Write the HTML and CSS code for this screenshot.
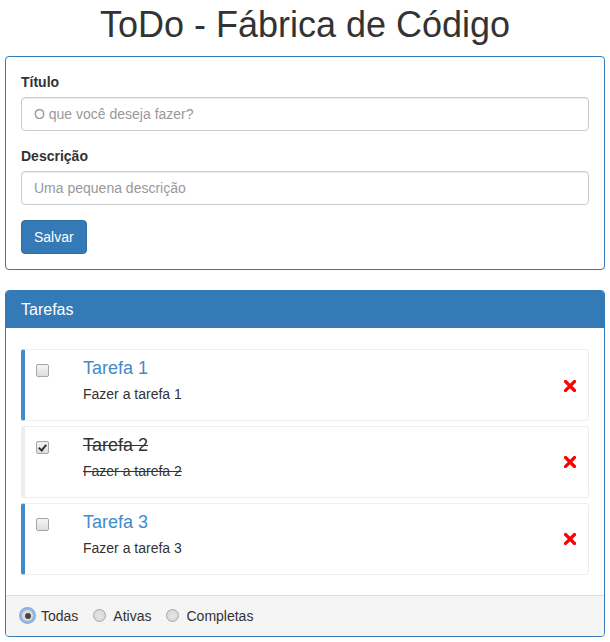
FILE: index.html
```html
<!DOCTYPE html>
<html lang="pt-BR">
<head>
    <meta charset="UTF-8">
    <meta name="viewport" content="width=device-width, initial-scale=1.0">
    <title>ToDo - Fábrica de Código</title>
    <link rel="stylesheet" href="styles.css">
</head>
<body>

    <h1 class="page-title">ToDo - Fábrica de Código</h1>

    <div class="panel panel-form">
        <form class="panel-body" id="todoForm">
            <div class="form-group">
                <label for="titulo">Título</label>
                <input type="text" id="titulo" class="form-control" placeholder="O que você deseja fazer?">
            </div>
            <div class="form-group">
                <label for="descricao">Descrição</label>
                <input type="text" id="descricao" class="form-control" placeholder="Uma pequena descrição">
            </div>
            <button type="submit" class="btn">Salvar</button>
        </form>
    </div>

    <div class="panel panel-tasks">
        <div class="panel-heading">Tarefas</div>
        <div class="panel-body">
            <ul class="task-list">
                <li class="task">
                    <input type="checkbox" class="task-check">
                    <div class="task-text">
                        <h4 class="task-title">Tarefa 1</h4>
                        <p class="task-desc">Fazer a tarefa 1</p>
                    </div>
                    <span class="task-remove">
                        <svg width="12" height="12" viewBox="0 0 12 12"><path d="M1.5 1.5 L10.5 10.5 M10.5 1.5 L1.5 10.5" stroke="#f00" stroke-width="3.2" stroke-linecap="square"/></svg>
                    </span>
                </li>
                <li class="task done">
                    <input type="checkbox" class="task-check" checked>
                    <div class="task-text">
                        <h4 class="task-title">Tarefa 2</h4>
                        <p class="task-desc">Fazer a tarefa 2</p>
                    </div>
                    <span class="task-remove">
                        <svg width="12" height="12" viewBox="0 0 12 12"><path d="M1.5 1.5 L10.5 10.5 M10.5 1.5 L1.5 10.5" stroke="#f00" stroke-width="3.2" stroke-linecap="square"/></svg>
                    </span>
                </li>
                <li class="task">
                    <input type="checkbox" class="task-check">
                    <div class="task-text">
                        <h4 class="task-title">Tarefa 3</h4>
                        <p class="task-desc">Fazer a tarefa 3</p>
                    </div>
                    <span class="task-remove">
                        <svg width="12" height="12" viewBox="0 0 12 12"><path d="M1.5 1.5 L10.5 10.5 M10.5 1.5 L1.5 10.5" stroke="#f00" stroke-width="3.2" stroke-linecap="square"/></svg>
                    </span>
                </li>
            </ul>
        </div>
        <div class="panel-footer">
            <label class="radio-inline"><input type="radio" name="filtro" class="focused" checked> Todas</label>
            <label class="radio-inline"><input type="radio" name="filtro"> Ativas</label>
            <label class="radio-inline"><input type="radio" name="filtro"> Completas</label>
        </div>
    </div>

</body>
</html>
```

FILE: styles.css
```css
* {
    box-sizing: border-box;
}
body {
    font-family: "Liberation Sans", Arial, sans-serif;
    font-size: 14px;
    line-height: 20px;
    color: #333;
    margin: 0;
    padding: 0 5px;
    background: #fff;
}
.page-title {
    font-size: 36px;
    font-weight: normal;
    line-height: 1.1;
    text-align: center;
    margin: 5px 0 11px;
}
.panel {
    border: 1px solid #337ab7;
    border-radius: 4px;
    margin-bottom: 20px;
    background: #fff;
}
.panel-body {
    display: block;
    padding: 15px;
}
.form-group {
    margin-bottom: 15px;
}
.form-group label {
    display: block;
    font-weight: bold;
    margin-bottom: 5px;
}
.form-control {
    display: block;
    width: 100%;
    height: 34px;
    padding: 6px 12px;
    font-family: inherit;
    font-size: 14px;
    color: #555;
    border: 1px solid #ccc;
    border-radius: 4px;
    box-shadow: inset 0 1px 1px rgba(0, 0, 0, 0.075);
    margin: 0;
}
.form-control::placeholder {
    color: #999;
}
.btn {
    display: inline-block;
    height: 34px;
    padding: 6px 12px;
    font-family: inherit;
    font-size: 14px;
    line-height: 20px;
    color: #fff;
    background: #337ab7;
    border: 1px solid #2e6da4;
    border-radius: 4px;
}
.panel-tasks .panel-heading {
    background: #337ab7;
    color: #fff;
    font-size: 16px;
    line-height: 17.6px;
    padding: 10px 15px;
    border-radius: 3px 3px 0 0;
}
.panel-tasks .panel-body {
    padding: 21px 15px 20px;
}
.task-list {
    list-style: none;
    margin: 0;
    padding: 0;
    display: flex;
    flex-direction: column;
    gap: 5px;
}
.task {
    display: flex;
    align-items: flex-start;
    border: 1px solid #eee;
    border-left: 4px solid #428bca;
    border-radius: 3px;
    padding: 9px 12px 6px 11px;
}
.task.done {
    border-left-color: #eee;
}
.task-check {
    appearance: none;
    width: 13px;
    height: 13px;
    margin: 5px 34px 0 0;
    border: 1px solid #a6a6a6;
    border-radius: 2px;
    background: linear-gradient(#f4f4f4, #dedede);
    flex-shrink: 0;
    position: relative;
}
.task-check:checked::after {
    content: "";
    position: absolute;
    left: 3px;
    top: 1px;
    width: 3px;
    height: 6px;
    border: solid #333;
    border-width: 0 2px 2px 0;
    transform: rotate(40deg);
}
.task-text {
    flex: 1;
}
.task-title {
    font-size: 18px;
    font-weight: normal;
    line-height: 1.1;
    color: #428bca;
    margin: 0 0 5px;
}
.task-desc {
    margin: 0 0 10px;
}
.task.done .task-title,
.task.done .task-desc {
    color: #333;
    text-decoration: line-through;
}
.task-remove {
    align-self: center;
    display: flex;
    margin-top: -2px;
}
.panel-footer {
    background: #f5f5f5;
    border-top: 1px solid #ddd;
    padding: 10px 15px;
    border-radius: 0 0 3px 3px;
    display: flex;
    gap: 15px;
}
.radio-inline {
    display: flex;
    align-items: center;
}
.radio-inline input {
    appearance: none;
    margin: 0 7px 0 0;
    width: 13px;
    height: 13px;
    border: 1px solid #a6a6a6;
    border-radius: 50%;
    background: radial-gradient(circle, #e6e6e6, #d4d4d4);
    position: relative;
}
.radio-inline input:checked::after {
    content: "";
    position: absolute;
    left: 2.5px;
    top: 2.5px;
    width: 6px;
    height: 6px;
    border-radius: 50%;
    background: #444;
}
.radio-inline input.focused {
    outline: 2px solid #7fb0f0;
    outline-offset: 0;
}
```
